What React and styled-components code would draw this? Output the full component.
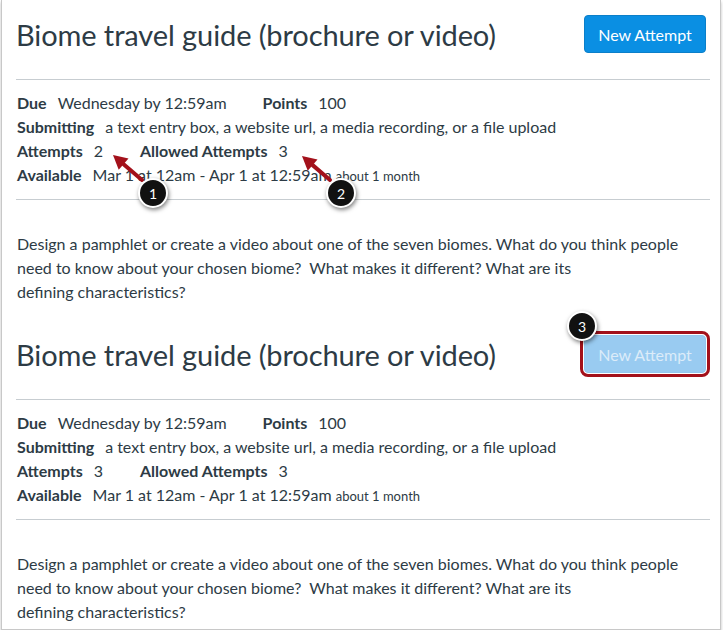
import React from 'react';
import styled, { createGlobalStyle } from 'styled-components';

const GlobalStyle = createGlobalStyle`
  body {
    margin: 0;
    background: #ffffff;
    font-family: Lato, "Open Sans", sans-serif;
    color: #2d3b45;
  }
`;

const Frame = styled.div`
  position: relative;
  width: 718px;
  height: 629px;
  margin-left: 1px;
  border: 1px solid #c8c8c8;
  border-top: none;
  box-shadow: 0 2px 3px rgba(0, 0, 0, 0.25);
  overflow: hidden;
  background: #fff;
`;

const Content = styled.div`
  padding: 0 10px 0 14px;
`;

const Section = styled.section`
  padding-bottom: 16px;
`;

const Header = styled.div`
  display: flex;
  align-items: center;
  justify-content: space-between;
  padding-top: 15px;
  height: 38px;
  margin-bottom: 26px;
`;

const Title = styled.h1`
  margin: 0;
  font-size: 29px;
  font-weight: 400;
  color: #2d3b45;
  letter-spacing: -0.1px;
`;

const AttemptButton = styled.button`
  position: relative;
  height: 38px;
  width: 122px;
  margin-right: 4px;
  border: 1px solid ${(p) => (p.$disabled ? '#93c6ee' : '#0b7fc9')};
  border-radius: 4px;
  background: ${(p) => (p.$disabled ? '#99cbf1' : '#0a8fe3')};
  color: ${(p) => (p.$disabled ? '#dcecf9' : '#ffffff')};
  font-family: Lato, sans-serif;
  font-size: 16px;
  padding: 0;
  cursor: pointer;
  outline: ${(p) => (p.$highlight ? '3px solid #a3111b' : 'none')};
  outline-offset: 1px;
`;

const Divider = styled.hr`
  margin: 0;
  border: none;
  border-top: 1px solid #c7cdd1;
`;

const Details = styled.div`
  padding: 11px 0 11px 1px;
`;

const DetailRow = styled.div`
  display: flex;
  align-items: baseline;
  line-height: 24px;
  font-size: 16px;
`;

const Item = styled.div`
  display: flex;
  align-items: baseline;
  margin-right: ${(p) => p.$gap || 36}px;
`;

const Label = styled.span`
  font-weight: 700;
  margin-right: 11px;
`;

const Value = styled.span``;

const Small = styled.span`
  font-size: 13px;
  margin-left: 4px;
`;

const Description = styled.p`
  margin: 32px 0 0 1px;
  font-size: 16px;
  line-height: 24px;
  max-width: 680px;
`;

const Badge = styled.div`
  position: absolute;
  left: ${(p) => p.$x - 15}px;
  top: ${(p) => p.$y - 15}px;
  width: 30px;
  height: 30px;
  border-radius: 50%;
  background: #111;
  border: 2px solid #fff;
  box-sizing: border-box;
  box-shadow: 1px 2px 4px rgba(0, 0, 0, 0.5);
  color: #fff;
  font-size: 14px;
  display: flex;
  align-items: center;
  justify-content: center;
`;

const Overlay = styled.svg`
  position: absolute;
  inset: 0;
  pointer-events: none;
`;

const Arrow = ({ x1, y1, x2, y2 }) => {
  const a = Math.atan2(y2 - y1, x2 - x1);
  const len = 14;
  const w = 7.5;
  const bx = x2 - len * Math.cos(a);
  const by = y2 - len * Math.sin(a);
  const px = -Math.sin(a) * w;
  const py = Math.cos(a) * w;
  return (
    <g>
      <line x1={x1} y1={y1} x2={bx} y2={by} stroke="#a3111b" strokeWidth="4" strokeLinecap="round" />
      <polygon points={`${x2},${y2} ${bx + px},${by + py} ${bx - px},${by - py}`} fill="#a3111b" />
    </g>
  );
};

const Assignment = ({ attempts, disabled, highlight }) => (
  <Section>
    <Header>
      <Title>Biome travel guide (brochure or video)</Title>
      <AttemptButton $disabled={disabled} $highlight={highlight}>New Attempt</AttemptButton>
    </Header>
    <Divider />
    <Details>
      <DetailRow>
        <Item>
          <Label>Due</Label>
          <Value>Wednesday by 12:59am</Value>
        </Item>
        <Item>
          <Label>Points</Label>
          <Value>100</Value>
        </Item>
      </DetailRow>
      <DetailRow>
        <Item>
          <Label>Submitting</Label>
          <Value>a text entry box, a website url, a media recording, or a file upload</Value>
        </Item>
      </DetailRow>
      <DetailRow>
        <Item $gap={37}>
          <Label>Attempts</Label>
          <Value>{attempts}</Value>
        </Item>
        <Item>
          <Label>Allowed Attempts</Label>
          <Value>3</Value>
        </Item>
      </DetailRow>
      <DetailRow>
        <Item>
          <Label>Available</Label>
          <Value>
            Mar 1 at 12am - Apr 1 at 12:59am<Small>about 1 month</Small>
          </Value>
        </Item>
      </DetailRow>
    </Details>
    <Divider />
    <Description>
      Design a pamphlet or create a video about one of the seven biomes. What do you think people
      need to know about your chosen biome?&nbsp; What makes it different? What are its
      <br />
      defining characteristics?
    </Description>
  </Section>
);

const App = () => (
  <>
    <GlobalStyle />
    <Frame>
      <Content>
        <Assignment attempts={2} />
        <Assignment attempts={3} disabled highlight />
      </Content>
      <Overlay width="720" height="633">
        <Arrow x1={140} y1={180} x2={111} y2={155} />
        <Arrow x1={328} y1={180} x2={300} y2={156} />
      </Overlay>
      <Badge $x={151} $y={193}>1</Badge>
      <Badge $x={339} $y={193}>2</Badge>
      <Badge $x={580} $y={326}>3</Badge>
    </Frame>
  </>
);

export default App;
